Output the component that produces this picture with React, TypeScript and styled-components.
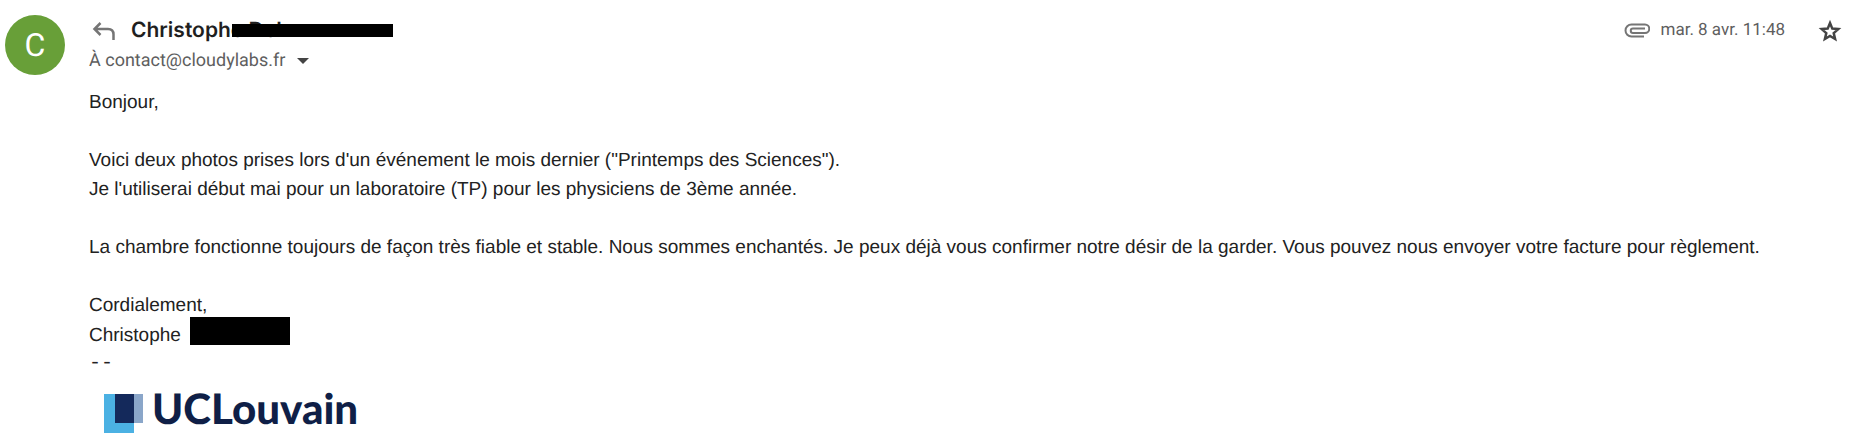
import React from "react";
import styled, { createGlobalStyle } from "styled-components";

const Global = createGlobalStyle`
  body { margin: 0; background: #fff; }
  * { box-sizing: border-box; }
`;

const Message = styled.article`
  display: flex;
  gap: 24px;
  padding: 15px 20px 11px 5px;
  color: #222;
  font-family: "Liberation Sans", Arial, sans-serif;
  font-size: 19px;
  line-height: 29px;
  text-rendering: geometricPrecision;
`;

const Avatar = styled.div`
  flex: none;
  display: grid;
  place-items: center;
  width: 60px;
  height: 60px;
  border-radius: 50%;
  background: #689f38;
  color: #fff;
  font: 32px/60px Roboto, sans-serif;
`;

const Content = styled.div`
  flex: 1;
  min-width: 0;
`;

const Header = styled.header`
  display: flex;
  justify-content: space-between;
  height: 31px;
  font-family: Roboto, sans-serif;
`;

const Group = styled.div`
  display: flex;
  align-items: center;
`;

const IconButton = styled.button`
  display: flex;
  padding: 0;
  border: 0;
  background: none;
  color: #444;
  cursor: pointer;
`;

const ReplyButton = styled(IconButton)`
  margin: 0 15px 0 3px;
  color: #757575;
`;

const Sender = styled.h1`
  position: relative;
  margin: 0;
  color: #1f1f1f;
  font-family: Inter, sans-serif;
  font-size: 21px;
  font-weight: 600;
`;

const Redaction = styled.span`
  display: inline-block;
  width: 100px;
  height: 28px;
  margin: -3px 0 0 4px;
  background: #000;
  vertical-align: -4px;
`;

const NameRedaction = styled.span`
  position: absolute;
  top: 8px;
  left: 101px;
  width: 161px;
  height: 13px;
  background: #000;
`;

const DateText = styled.time`
  margin: 0 33px 0 11px;
  color: #5e5e5e;
  font-size: 17px;
`;

const Recipient = styled.div`
  display: flex;
  align-items: center;
  gap: 12px;
  color: #5e5e5e;
  font-family: Roboto, sans-serif;
  font-size: 18px;
`;

const Body = styled.div`
  margin-top: 13px;
`;

const Paragraph = styled.p`
  margin: 0 0 29px;
`;

const Closing = styled.p`
  margin: 0;
`;

const Separator = styled.div`
  font: 20px/28px "Liberation Mono", monospace;
`;

const Logo = styled.div`
  display: flex;
  gap: 9px;
  padding: 16px 0 0 15px;
  color: #0f1f47;
  font: 900 42px/28px Lato, sans-serif;
`;

export default function App() {
  return (
    <>
      <Global />
      <Message>
        <Avatar>C</Avatar>
        <Content>
          <Header>
            <Group>
              <ReplyButton aria-label="Répondre">
                <svg width="24" height="20" viewBox="0 0 24 20" fill="none" stroke="currentColor" strokeWidth="2.500">
                  <path d="M8.500 2 2.500 8l6 6M2.500 8h13.500q5.500 0 5.500 5.500V19" />
                </svg>
              </ReplyButton>
              <Sender>Christophe Del<NameRedaction /></Sender>
            </Group>
            <Group>
              <svg width="26" height="15" viewBox="0 0 26 15" fill="none" stroke="#757575" strokeWidth="2">
                <path d="M20 13.500H7.500a6 6 0 0 1 0-12H21a4.200 4.200 0 0 1 0 8.500H9a2.200 2.200 0 0 1 0-4.500h12" />
              </svg>
              <DateText>mar. 8 avr. 11:48</DateText>
              <IconButton aria-label="Suivre">
                <svg width="24" height="24" viewBox="0 0 24 24" fill="none" stroke="currentColor" strokeWidth="2.500">
                  <path d="m12 4 2.300 5.600 6 .5-4.600 4 1.400 5.900L12 16.900 6.900 20l1.400-5.900-4.600-4 6-.5z" />
                </svg>
              </IconButton>
            </Group>
          </Header>
          <Recipient>
            À contact@cloudylabs.fr
            <IconButton aria-label="Afficher les détails">
              <svg width="12" height="6" viewBox="0 0 12 6" fill="currentColor"><path d="M0 0h12L6 6z" /></svg>
            </IconButton>
          </Recipient>
          <Body>
            <Paragraph>Bonjour,</Paragraph>
            <Paragraph>
              Voici deux photos prises lors d'un événement le mois dernier ("Printemps des Sciences").<br />
              Je l'utiliserai début mai pour un laboratoire (TP) pour les physiciens de 3ème année.
            </Paragraph>
            <Paragraph>
              La chambre fonctionne toujours de façon très fiable et stable. Nous sommes enchantés. Je peux déjà vous
              confirmer notre désir de la garder. Vous pouvez nous envoyer votre facture pour règlement.
            </Paragraph>
            <Closing>
              Cordialement,<br />
              Christophe <Redaction />
            </Closing>
            <Separator>--</Separator>
          </Body>
          <Logo>
            <svg width="39" height="39" viewBox="0 0 39 39">
              <path fill="#4bb1e3" d="M0 0h30v39H0z" />
              <path fill="#8aa6c9" d="M30 0h9v29H30z" />
              <path fill="#14295b" d="M11 0h19v29H11z" />
            </svg>
            UCLouvain
          </Logo>
        </Content>
      </Message>
    </>
  );
}
